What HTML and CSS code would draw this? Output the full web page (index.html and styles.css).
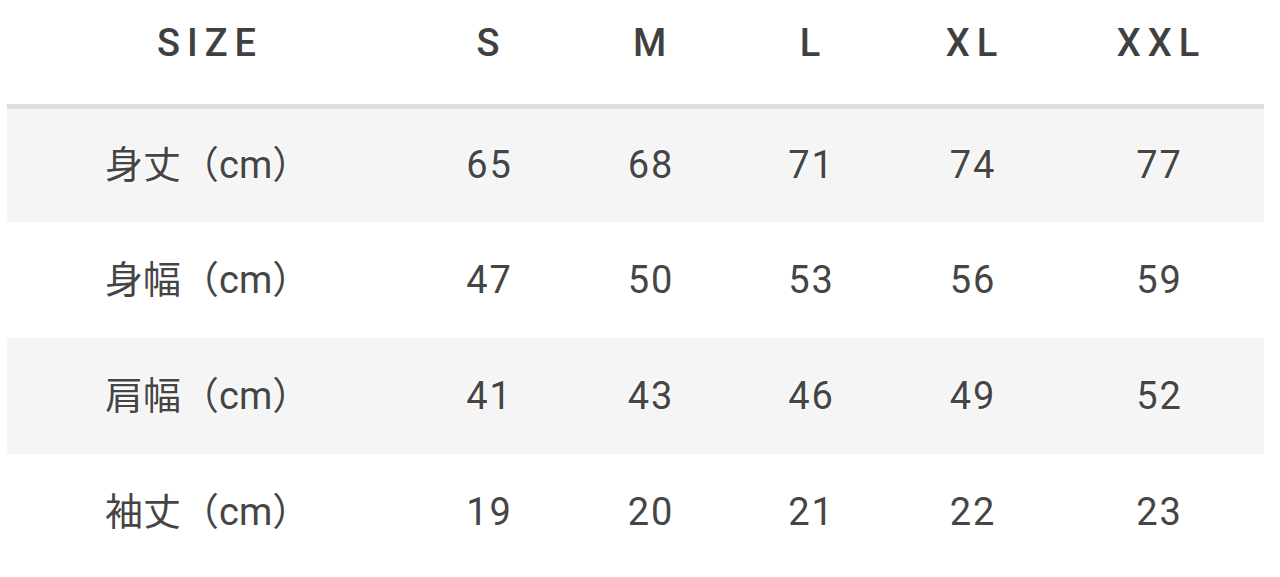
FILE: index.html
```html
<!DOCTYPE html>
<html lang="ja">
<head>
<meta charset="utf-8">
<link rel="stylesheet" href="styles.css">
</head>
<body>
<table class="size-table">
  <colgroup>
    <col class="c-label"><col class="c-s"><col class="c-m"><col class="c-l"><col class="c-xl"><col class="c-xxl">
  </colgroup>
  <thead>
    <tr class="head-row">
      <th class="label-head">SIZE</th><th>S</th><th>M</th><th>L</th><th>XL</th><th>XXL</th>
    </tr>
  </thead>
  <tbody>
    <tr class="row shaded"><td class="label">身丈（cm）</td><td>65</td><td>68</td><td>71</td><td>74</td><td>77</td></tr>
    <tr class="row"><td class="label">身幅（cm）</td><td>47</td><td>50</td><td>53</td><td>56</td><td>59</td></tr>
    <tr class="row shaded"><td class="label">肩幅（cm）</td><td>41</td><td>43</td><td>46</td><td>49</td><td>52</td></tr>
    <tr class="row"><td class="label">袖丈（cm）</td><td>19</td><td>20</td><td>21</td><td>22</td><td>23</td></tr>
  </tbody>
</table>
</body>
</html>
```

FILE: styles.css
```css
html, body {
  margin: 0;
  padding: 0;
  background: #ffffff;
}
body {
  font-family: Roboto, "Noto Sans CJK JP", sans-serif;
  color: #454545;
}
.size-table {
  margin-left: 7px;
  width: 1257px;
  table-layout: fixed;
  border-collapse: collapse;
  border-spacing: 0;
}
.c-label { width: 400px; }
.c-s { width: 163px; }
.c-m { width: 160px; }
.c-l { width: 161px; }
.c-xl { width: 162px; }
.c-xxl { width: 211px; }

.head-row th {
  height: 106px;
  box-sizing: border-box;
  padding: 24px 0 0 6px;
  vertical-align: top;
  font-size: 38px;
  line-height: 38px;
  font-weight: 500;
  letter-spacing: 7px;
  text-align: center;
  color: #404040;
  border-bottom: 5px solid #dedede;
  text-shadow: 0 0 4px #fff;
}
.row td {
  height: 116px;
  box-sizing: border-box;
  padding: 0 0 0 2px;
  vertical-align: middle;
  text-align: center;
  font-size: 38px;
  line-height: 40px;
  font-weight: 400;
  letter-spacing: 2px;
  color: #454545;
  text-shadow: 0 0 4px #fff, 0 0 2px #fff;
}
.row td.label {
  text-align: left;
  padding-left: 98px;
  letter-spacing: 0;
}
.shaded td {
  background: #f5f5f5;
}
```
